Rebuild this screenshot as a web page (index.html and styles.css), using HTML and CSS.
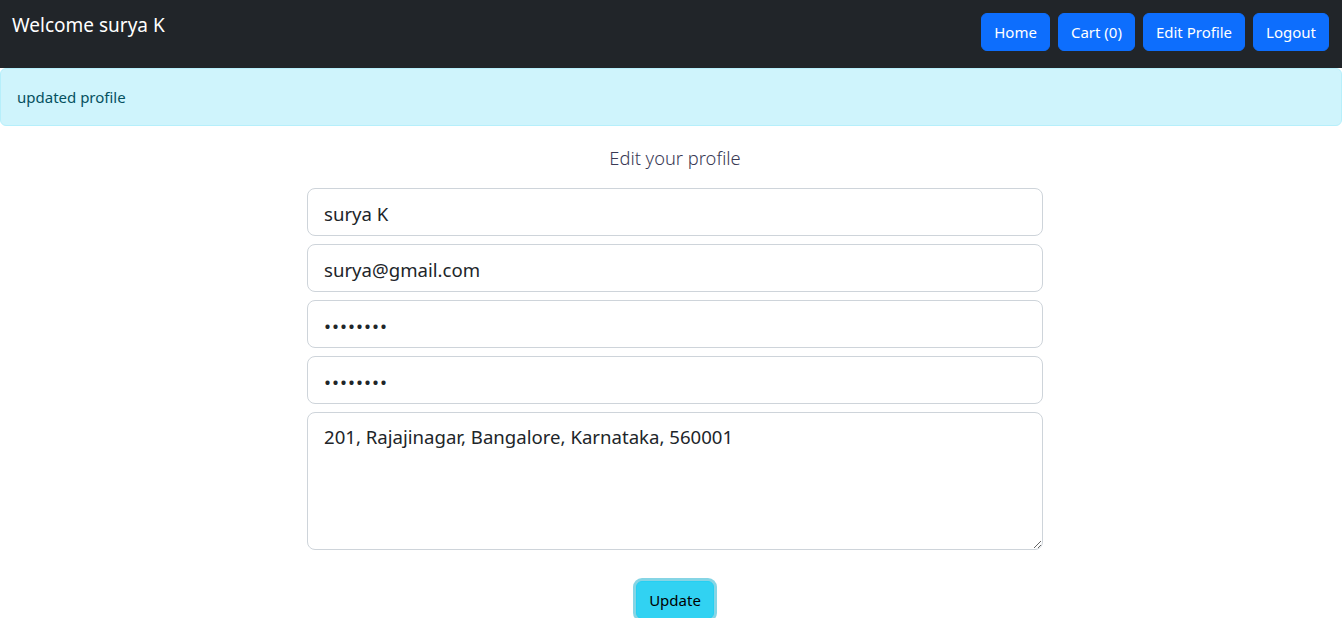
FILE: index.html
```html
<!DOCTYPE html>
<html lang="en">
<head>
<meta charset="utf-8">
<title>Edit Profile</title>
<link rel="stylesheet" href="styles.css">
</head>
<body>
<nav class="navbar">
  <div class="brand">Welcome surya K</div>
  <div class="nav-buttons">
    <a class="btn btn-primary" href="#">Home</a>
    <a class="btn btn-primary" href="#">Cart (0)</a>
    <a class="btn btn-primary" href="#">Edit Profile</a>
    <a class="btn btn-primary" href="#">Logout</a>
  </div>
</nav>
<div class="alert">updated profile</div>
<main class="form-wrap">
  <h2 class="title">Edit your profile</h2>
  <form class="form">
    <input class="field" type="text" value="surya K">
    <input class="field" type="email" value="surya@gmail.com">
    <input class="field pw" type="password" value="password">
    <input class="field pw" type="password" value="password">
    <textarea class="field area">201, Rajajinagar, Bangalore, Karnataka, 560001</textarea>
    <div class="actions">
      <button class="btn btn-info" type="button">Update</button>
    </div>
  </form>
</main>
</body>
</html>
```

FILE: styles.css
```css
* { box-sizing: border-box; }
html, body { margin: 0; padding: 0; }
body {
  font-family: "Noto Sans", "Open Sans", "Liberation Sans", sans-serif;
  font-size: 16px;
  color: #212529;
  background: #fff;
  overflow: hidden;
}
.navbar {
  background: #212529;
  height: 68px;
  display: flex;
  justify-content: space-between;
  align-items: flex-start;
  padding: 13px 13px 0 12px;
}
.brand {
  color: #fff;
  font-size: 19px;
  line-height: 24px;
}
.nav-buttons {
  display: flex;
  gap: 8px;
}
.btn {
  display: inline-block;
  font-family: inherit;
  font-size: 15px;
  line-height: 24px;
  padding: 6px 12px;
  border-radius: 6px;
  border: 1px solid transparent;
  text-decoration: none;
  cursor: pointer;
}
.btn-primary {
  background: #0d6efd;
  border-color: #0d6efd;
  color: #fff;
}
.alert {
  background: #cff4fc;
  border: 1px solid #b6effb;
  border-radius: 6px;
  color: #055160;
  height: 58px;
  padding: 0 16px;
  display: flex;
  align-items: center;
  font-size: 15px;
}
.form-wrap {
  width: 736px;
  margin-left: calc(50% - 364px);
}
.title {
  margin: 20px 0 18px;
  text-align: center;
  font-size: 18.3px;
  line-height: 24px;
  font-weight: 300;
  color: #3a3a55;
}
.form {
  display: flex;
  flex-direction: column;
  gap: 8px;
}
.field {
  display: block;
  width: 100%;
  height: 48px;
  padding: 9px 16px 7px;
  font-family: inherit;
  font-size: 18.6px;
  line-height: 30px;
  color: #212529;
  border: 1px solid #ced4da;
  border-radius: 8px;
  background: #fff;
  outline: none;
}
.pw {
  letter-spacing: 1px;
}
.area {
  height: 138px;
  resize: vertical;
}
.actions {
  display: flex;
  justify-content: center;
  margin-top: 23px;
}
.btn-info {
  background: #31d2f2;
  border-color: #25cff2;
  color: #000;
  box-shadow: 0 0 0 3px rgba(11, 172, 204, 0.5);
}
```
